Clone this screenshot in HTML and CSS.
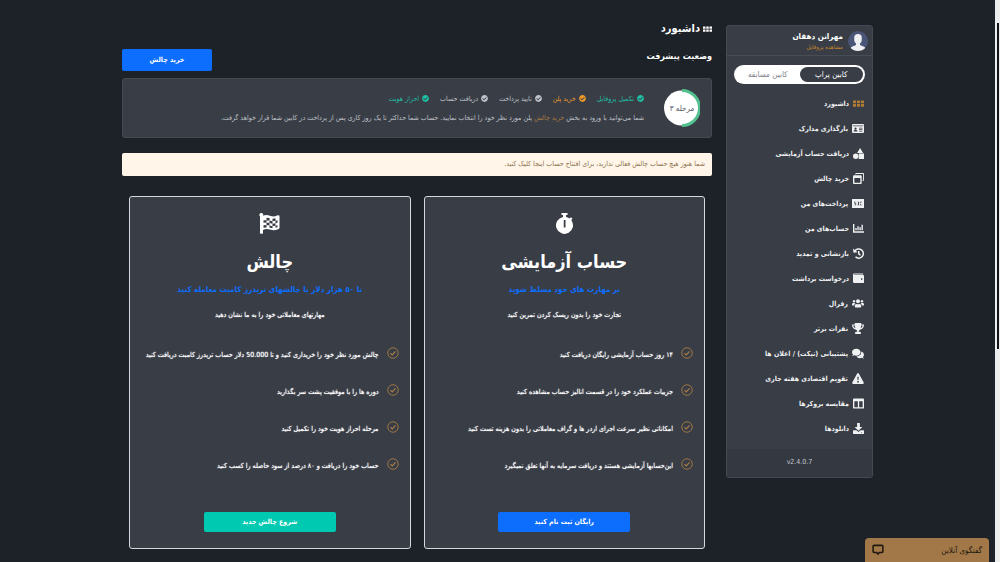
FILE: index.html
```html
<!DOCTYPE html>
<html lang="fa" dir="rtl">
<head>
<meta charset="utf-8">
<title>داشبورد</title>
<link rel="stylesheet" href="styles.css">
</head>
<body>
<svg class="sprite" aria-hidden="true">
  <symbol id="i-grid" viewBox="0 0 18 12"><path d="M0 1h5v4.500H0zM6.500 1h5v4.500h-5zM13 1h5v4.500h-5zM0 7h5v4.500H0zM6.500 7h5v4.500h-5zM13 7h5v4.500h-5z"/></symbol>
  <symbol id="i-check" viewBox="0 0 512 512"><path d="M504 256c0 136.967-111.033 248-248 248S8 392.967 8 256 119.033 8 256 8s248 111.033 248 248zM227.314 387.314l184-184c6.248-6.248 6.248-16.379 0-22.627l-22.627-22.627c-6.248-6.249-16.379-6.249-22.628 0L216 308.118l-70.059-70.059c-6.248-6.248-16.379-6.248-22.628 0l-22.627 22.627c-6.248 6.248-6.248 16.379 0 22.627l104 104c6.249 6.249 16.379 6.249 22.628.001z"/></symbol>
  <symbol id="i-tick" viewBox="0 0 24 24"><g fill="none" stroke="currentColor" stroke-width="1.800"><circle cx="12" cy="12" r="10.500"/><path d="M7 12.500l3.500 3.200L17 8.800" stroke-width="2.400"/></g></symbol>
  <symbol id="i-card" viewBox="0 0 24 20"><path fill-rule="evenodd" d="M2 1h20q2 0 2 2v14q0 2-2 2H2q-2 0-2-2V3q0-2 2-2zM1.500 4v1.500h21V4zM7 8a2.200 2.200 0 1 0 .1 0zM3 16h8q0-3-2.500-3h-3Q3 13 3 16zM14 8.500V10h7V8.500zM14 11.500V13h7v-1.500zM14 14.500V16h7v-1.500z"/></symbol>
  <symbol id="i-shapes" viewBox="0 0 24 24"><path d="M15.500 0L22 11H9zM12.500 12H24v12H12.500z"/><circle cx="5.800" cy="17.800" r="6"/></symbol>
  <symbol id="i-windows" viewBox="0 0 24 24"><path fill-rule="evenodd" d="M7 0h15q2 0 2 2v13q0 2-2 2h-1.500v-2H22V2H7v1.500H5V2q0-2 2-2zM2 5h15q2 0 2 2v15q0 2-2 2H2q-2 0-2-2V7q0-2 2-2zm1 6v10h13V11z"/></symbol>
  <symbol id="i-money" viewBox="0 0 26 20"><path fill-rule="evenodd" d="M1 0h24q1 0 1 1v18q0 1-1 1H1q-1 0-1-1V1q0-1 1-1zM5 6h4v1.500H6.500v1.200H9V14H5v-1.500h2.500V10H5zM12 6h3v8h-3v-1.500h1v-5h-1zM17 6h5v1.500h-3.500V9H17zM17 10.500h1.500v2H22V14h-5z"/></symbol>
  <symbol id="i-chart" viewBox="0 0 24 20"><path d="M0 0h3v16h21v3.500H0zM5 9h3v5H5zM9.500 5h3v9h-3zM14 7h3v7h-3zM18.500 2h3v12h-3z"/></symbol>
  <symbol id="i-history" viewBox="0 0 24 24"><path fill="none" stroke="currentColor" stroke-width="3.200" d="M4 7a10 10 0 1 1 1.500 12.200M12.500 6.500v6.300l4 3"/><path d="M0 1l1 9.500 9-1.500z"/></symbol>
  <symbol id="i-wallet" viewBox="0 0 24 22"><path fill-rule="evenodd" d="M3 0h18q1.500 0 1.500 2H3q-1 0-1 .800T3 3.600h19q2 0 2 2V19q0 2-2 2H3q-3 0-3-3V3q0-3 3-3zm16 10.500a1.600 1.600 0 1 0 .1 0z"/></symbol>
  <symbol id="i-users" viewBox="0 0 30 22"><circle cx="5" cy="5.500" r="3"/><circle cx="25" cy="5.500" r="3"/><circle cx="15" cy="5.500" r="5"/><path d="M0 15v-2q0-3.500 3.500-3.500h3q1.200 0 2 .700Q5.800 12 5.500 16H1q-1 0-1-1zM30 15v-2q0-3.500-3.500-3.500h-3q-1.200 0-2 .700 2.700 1.800 3 5.800H29q1 0 1-1zM7 19v-2q0-5 4-5 4 1.500 8 0 4 0 4 5v2q0 2-2 2H9q-2 0-2-2z"/></symbol>
  <symbol id="i-trophy" viewBox="0 0 26 24"><path fill-rule="evenodd" d="M6 0h14v3h6q0 9-8.500 11.500-3 1.500-3 4.500H18q1.500 1 1.500 5h-13q0-4 1.500-5h3.500q0-3-3-4.500Q0 12 0 3h6zM2.500 5.500Q3.500 10 7.500 11.500 6.200 9 6 5.500zM23.500 5.500H20q-.2 3.500-1.500 6 4-1.500 5-6z"/></symbol>
  <symbol id="i-comments" viewBox="0 0 28 24"><path d="M10 1c5.500 0 10 3.500 10 8s-4.500 8-10 8q-2.500 0-4.700-.900Q3 18 .200 18q2-2 2.200-4Q0 12 0 9c0-4.500 4.500-8 10-8z"/><path d="M21.800 7.500q6.200 2 6.200 7.500 0 3-2.400 5 .2 2 2.200 4-2.800 0-5.100-1.800-2.200.800-4.700.800-5 0-7.500-3.800 11-.800 11.300-11.700z"/></symbol>
  <symbol id="i-warning" viewBox="0 0 26 24"><path fill-rule="evenodd" d="M11.300 1q1.700-2 3.400 0L25.500 20.500q1 3-1.700 3.300H2.200Q-.5 23.500.5 20.500zM11.500 8l.5 8h2l.5-8zM13 17.500a1.700 1.700 0 1 0 .1 0z"/></symbol>
  <symbol id="i-columns" viewBox="0 0 24 22"><path fill-rule="evenodd" d="M2 0h20q2 0 2 2v18q0 2-2 2H2q-2 0-2-2V2q0-2 2-2zm1 6v13h7.500V6zm10.500 0v13H21V6z"/></symbol>
  <symbol id="i-download" viewBox="0 0 24 24"><path d="M9 0h6v8.500h5.500L12 17 3.500 8.500H9z"/><path fill-rule="evenodd" d="M1 16h6.500l4.500 3.800 4.500-3.800H23q1 0 1 1v6q0 1-1 1H1q-1 0-1-1v-6q0-1 1-1zm18 4a1 1 0 1 0 .1 0z"/></symbol>
  <symbol id="i-stopwatch" viewBox="0 0 36 42"><path fill-rule="evenodd" d="M12 0h12v4h-3v4q4 .800 7.200 3.200L31 8.500l3 3-2.600 2.700A17 17 0 1 1 15 8V4h-3zM16.500 14v15h3.500V14z"/></symbol>
  <symbol id="i-flag" viewBox="0 0 42 42"><path d="M2 6.500A3.800 3.800 0 1 1 8 5.500q6-3 14 0t14-.500q5-1.500 5 1.500v23q0 2-3 3.200-8 3.500-16 .500T8 34v6q0 1.500-1.500 1.500h-3Q2 41.500 2 40z"/><path fill="#383d46" d="M15 9.500l6 .500v5l-6-.500zM27 11.500l6-.800v5l-6 .800zM9 14.500l6-.500v5l-6 .500zM21 15l6 1.500v5L21 20zM33 15.700l4-1.200v5l-4 1.200zM15 19l6 1v5l-6-1zM27 21.500l6-.800v5l-6 .800zM9 24.500l6-.500v5l-6 .500zM21 25l6 1.500v4L21 29.500zM33 25.700l4-1.200v4l-4 1.200z"/></symbol>
</svg>

<div class="page">
  <aside class="sidebar">
    <div class="profile">
      <svg class="avatar" viewBox="0 0 40 40" aria-hidden="true">
        <circle cx="20" cy="20" r="20" fill="#4b5577"/>
        <path fill="#eef0f4" d="M12.500 13q0-7 7.500-7t7.500 7v6q-.5 3.500-3.500 6v3l8 3.500q2 1 2.500 2.500Q29 40 20 40T5.500 34q.5-1.500 2.500-2.500l8-3.500v-3q-3-2.500-3.500-6z"/>
      </svg>
      <div class="who">
        <strong>مهرانن دهقان</strong>
        <a href="#profile">مشاهده پروفایل</a>
      </div>
    </div>
    <div class="switch">
      <button type="button" class="on">کابین پراپ</button>
      <button type="button">کابین مسابقه</button>
    </div>
    <nav class="menu">
      <a href="#" class="active"><svg><use href="#i-grid"/></svg>داشبورد</a>
      <a href="#"><svg class="wide"><use href="#i-card"/></svg>بارگذاری مدارک</a>
      <a href="#"><svg><use href="#i-shapes"/></svg>دریافت حساب آزمایشی</a>
      <a href="#"><svg><use href="#i-windows"/></svg>خرید چالش</a>
      <a href="#"><svg class="wide"><use href="#i-money"/></svg>پرداخت‌های من</a>
      <a href="#"><svg><use href="#i-chart"/></svg>حساب‌های من</a>
      <a href="#"><svg><use href="#i-history"/></svg>بازنشانی و تمدید</a>
      <a href="#"><svg><use href="#i-wallet"/></svg>درخواست برداشت</a>
      <a href="#"><svg class="wide"><use href="#i-users"/></svg>رفرال</a>
      <a href="#"><svg class="wide"><use href="#i-trophy"/></svg>نفرات برتر</a>
      <a href="#"><svg class="wide"><use href="#i-comments"/></svg>پشتیبانی (تیکت) / اعلان ها</a>
      <a href="#"><svg class="wide"><use href="#i-warning"/></svg>تقویم اقتصادی هفته جاری</a>
      <a href="#"><svg><use href="#i-columns"/></svg>مقایسه بروکرها</a>
      <a href="#"><svg><use href="#i-download"/></svg>دانلودها</a>
    </nav>
    <footer class="version" dir="ltr">v2.4.0.7</footer>
  </aside>

  <main class="main">
    <h1><svg aria-hidden="true"><use href="#i-grid"/></svg>داشبورد</h1>
    <div class="heading">
      <h2>وضعیت پیشرفت</h2>
      <button type="button" class="buy">خرید چالش</button>
    </div>

    <section class="progress">
      <div class="ring">
        <svg viewBox="0 0 36 38" aria-hidden="true">
          <circle cx="17.500" cy="19" r="17.500" fill="#fff"/>
          <path d="M18 1.500a17.500 17.500 0 0 1 0 35" fill="none" stroke="#53c08f" stroke-width="3"/>
        </svg>
        <span>مرحله ۳</span>
      </div>
      <div class="detail">
        <ul class="steps">
          <li class="done"><svg><use href="#i-check"/></svg>تکمیل پروفایل</li>
          <li class="now"><svg><use href="#i-check"/></svg>خرید پلن</li>
          <li><svg><use href="#i-check"/></svg>تایید پرداخت</li>
          <li><svg><use href="#i-check"/></svg>دریافت حساب</li>
          <li class="done"><svg><use href="#i-check"/></svg>احراز هویت</li>
        </ul>
        <p>شما می‌توانید با ورود به بخش <a href="#buy">خرید چالش</a> پلن مورد نظر خود را انتخاب نمایید. حساب شما حداکثر تا یک روز کاری پس از پرداخت در کابین شما قرار خواهد گرفت.</p>
      </div>
    </section>

    <p class="notice">شما هنوز هیچ حساب چالش فعالی ندارید، برای افتتاح حساب اینجا کلیک کنید.</p>

    <section class="plans">
      <article class="plan">
        <svg class="emblem" aria-hidden="true"><use href="#i-stopwatch"/></svg>
        <h3>حساب آزمایشی</h3>
        <p class="lead">بر مهارت های خود مسلط شوید</p>
        <p class="sub">تجارت خود را بدون ریسک کردن تمرین کنید</p>
        <ul>
          <li><svg><use href="#i-tick"/></svg><span>۱۴ روز حساب آزمایشی رایگان دریافت کنید</span></li>
          <li><svg><use href="#i-tick"/></svg><span>جزییات عملکرد خود را در قسمت انالیز حساب مشاهده کنید</span></li>
          <li><svg><use href="#i-tick"/></svg><span>امکاناتی نظیر سرعت اجرای اردر ها و گراف معاملاتی را بدون هزینه تست کنید</span></li>
          <li><svg><use href="#i-tick"/></svg><span>این‌حسابها آزمایشی هستند و دریافت سرمایه به آنها تعلق نمیگیرد</span></li>
        </ul>
        <button type="button" class="cta">رایگان ثبت نام کنید</button>
      </article>
      <article class="plan">
        <svg class="emblem" aria-hidden="true"><use href="#i-flag"/></svg>
        <h3>چالش</h3>
        <p class="lead">تا ۵۰ هزار دلار با چالشهای تریدرز کامبت معامله کنید</p>
        <p class="sub">مهارتهای معاملاتی خود را به ما نشان دهید</p>
        <ul>
          <li><svg><use href="#i-tick"/></svg><span>چالش مورد نظر خود را خریداری کنید و تا 50.000 دلار حساب تریدرز کامبت دریافت کنید</span></li>
          <li><svg><use href="#i-tick"/></svg><span>دوره ها را با موفقیت پشت سر بگذارید</span></li>
          <li><svg><use href="#i-tick"/></svg><span>مرحله احراز هویت خود را تکمیل کنید</span></li>
          <li><svg><use href="#i-tick"/></svg><span>حساب خود را دریافت و ۸۰ درصد از سود حاصله را کسب کنید</span></li>
        </ul>
        <button type="button" class="cta teal">شروع چالش جدید</button>
      </article>
    </section>
  </main>
</div>

<button type="button" class="chat">
  <span>گفتگوی آنلاین</span>
  <svg viewBox="0 0 22 22" aria-hidden="true"><path d="M4 2.500h14q2 0 2 2v9q0 2-2 2h-4.500L11 18.500l-2.500-3H4q-2 0-2-2v-9q0-2 2-2z" fill="none" stroke="#1c1710" stroke-width="2.800"/></svg>
</button>
<div class="scrollbar" aria-hidden="true"><i></i></div>
</body>
</html>
```
FILE: styles.css
```css
* { box-sizing: border-box; }

body {
  margin: 0;
  min-height: 100vh;
  padding-right: 5px;
  background: #1d2128;
  color: #fff;
  font-family: "DejaVu Sans Condensed", "DejaVu Sans", sans-serif;
  font-size: 7px;
}

h1, h2, h3, p, ul { margin: 0; padding: 0; }
ul { list-style: none; }
a { text-decoration: none; }
svg { fill: currentColor; flex: none; }
button { border: 0; padding: 0; font: inherit; color: inherit; cursor: pointer; }
.sprite { position: absolute; width: 0; height: 0; }

.page {
  display: flex;
  align-items: flex-start;
  gap: 14px;
  max-width: 751px;
  margin: 0 auto;
  padding-bottom: 14px;
}

/* Sidebar */
.sidebar {
  width: 147px;
  flex: none;
  margin-top: 25px;
  background: #383d46;
  border: 1px solid #454a52;
  border-radius: 3px;
}
.profile {
  display: flex;
  align-items: center;
  gap: 5px;
  height: 30px;
  padding: 0 4px;
  border-bottom: 1px solid #484d55;
}
.avatar { width: 20px; height: 20px; }
.who { display: flex; flex-direction: column; }
.who strong { font-size: 8px; line-height: 11px; }
.who a { font-size: 6px; line-height: 9px; color: #c8872d; }

.switch {
  display: flex;
  margin: 9px 7px 7px;
  height: 19px;
  padding: 2px;
  background: #fff;
  border-radius: 10px;
}
.switch button {
  flex: 1;
  border-radius: 9px;
  background: transparent;
  color: #7d828a;
  font-size: 8px;
}
.switch .on { background: #383d46; color: #fff; }

.menu { display: flex; flex-direction: column; padding: 0 8px 8px; font-weight: bold; }
.menu a { display: flex; align-items: center; gap: 4px; height: 25px; color: #f0f1f3; }
.menu svg { width: 11px; height: 11px; }
.menu .wide { width: 12px; }
.menu .active svg { color: #b17b35; }
.version {
  height: 28px;
  line-height: 27px;
  text-align: center;
  color: #c3c7cc;
  background: #343941;
}

/* Main column */
.main { flex: 1; min-width: 0; padding-top: 20px; }
h1 { display: flex; align-items: center; gap: 3px; font-size: 11px; line-height: 18px; }
h1 svg { width: 9px; height: 8px; }
.heading { display: flex; justify-content: space-between; margin-top: 11px; }
h2 { font-size: 9px; line-height: 15px; }
.buy { width: 90px; height: 22px; border-radius: 2px; background: #0d6efd; font-weight: bold; }

.progress {
  display: flex;
  align-items: center;
  gap: 20px;
  height: 60px;
  margin-top: 7px;
  padding: 0 11px;
  background: #383d46;
  border: 1px solid #454a52;
  border-radius: 3px;
}
.ring { display: grid; place-items: center; width: 36px; flex: none; color: #555a61; font-size: 8px; }
.ring > * { grid-area: 1 / 1; }
.ring svg { width: 36px; height: 38px; }
.detail { color: #c0c4ca; }
.steps { display: flex; gap: 11px; line-height: 14px; }
.steps li { display: flex; align-items: center; gap: 3px; }
.steps svg { width: 7px; height: 7px; }
.steps .done { color: #1fbfa5; }
.steps .now { color: #f0982a; }
.detail p { margin-top: 5px; line-height: 14px; }
.detail a { color: #a87c45; }

.notice {
  margin-top: 15px;
  padding: 0 7px;
  line-height: 23px;
  border-radius: 2px;
  background: #fff5e8;
  color: #8a7250;
}

.plans { display: grid; grid-template-columns: repeat(2, minmax(0, 1fr)); gap: 13px; padding: 20px 7px 0; }
.plan {
  display: flex;
  flex-direction: column;
  align-items: center;
  padding: 16px 11px;
  background: #383d46;
  border: 1px solid #d5d8dc;
  border-radius: 3px;
}
.emblem { width: 21px; height: 21px; }
h3 { margin-top: 13px; font-size: 18px; line-height: 30px; }
.lead { margin-top: 5px; font-size: 8px; line-height: 16px; font-weight: bold; color: #0d6efd; }
.sub { margin-top: 10px; line-height: 14px; text-shadow: 0 0 1px; }
.plan ul { align-self: stretch; margin-top: 25px; }
.plan li { display: flex; gap: 8px; height: 37px; text-shadow: 0 0 1px; }
.plan li svg { width: 12px; height: 12px; color: #a87c45; }
.plan li span { line-height: 16px; white-space: nowrap; }
.cta { width: 132px; height: 20px; margin-top: 17px; border-radius: 2px; background: #0d6efd; font-weight: bold; }
.teal { background: #00c9b1; }

/* Chat launcher */
.chat {
  position: fixed;
  right: 11px;
  bottom: 0;
  display: flex;
  align-items: center;
  justify-content: space-between;
  width: 124px;
  height: 24px;
  padding: 0 7px;
  border-radius: 4px 4px 0 0;
  background: #a27848;
  color: #1c1710;
  font-size: 8px;
}
.chat svg { width: 12px; height: 12px; }

.scrollbar { position: fixed; top: 0; right: 0; width: 5px; height: 100%; padding: 23px 1px 0 0; background: #eceded; }
.scrollbar i { display: block; width: 2px; height: 58vh; background: #111418; }
```
